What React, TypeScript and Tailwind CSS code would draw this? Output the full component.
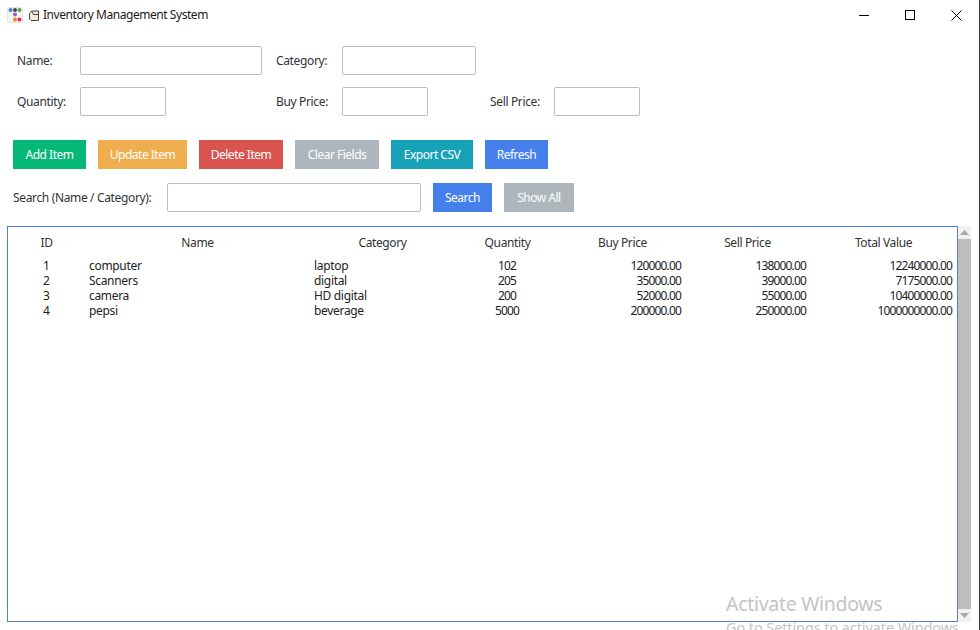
const FONT = "font-['Noto_Sans','Open_Sans',sans-serif]";

function Field({ w }: { w: string }) {
  return <input className={`${w} h-[29px] border border-[#bdbdbd] rounded-[2px] bg-white outline-none`} />;
}

function Label({ w, children }: { w: string; children: string }) {
  return <span className={`${w} shrink-0 text-[12px] tracking-[-0.35px] text-[#333333]`}>{children}</span>;
}

function Btn({ w, bg, children }: { w: string; bg: string; children: string }) {
  return (
    <button className={`${w} ${bg} h-[29px] shrink-0 text-white text-[12px] tracking-[-0.5px] flex items-center justify-center`}>
      {children}
    </button>
  );
}

const rows = [
  ["1", "computer", "laptop", "102", "120000.00", "138000.00", "12240000.00"],
  ["2", "Scanners", "digital", "205", "35000.00", "39000.00", "7175000.00"],
  ["3", "camera", "HD digital", "200", "52000.00", "55000.00", "10400000.00"],
  ["4", "pepsi", "beverage", "5000", "200000.00", "250000.00", "1000000000.00"],
];
const headers = ["ID", "Name", "Category", "Quantity", "Buy Price", "Sell Price", "Total Value"];
const cellClass = [
  "text-center",
  "text-left pl-1 tracking-[-0.32px]",
  "text-left pl-1 tracking-[-0.32px]",
  "text-center tracking-[-0.9px] pr-[1px]",
  "text-right pr-1 tracking-[-0.85px]",
  "text-right pr-1 tracking-[-0.85px]",
  "text-right pr-[5px] tracking-[-0.85px]",
];

export default function App() {
  return (
    <div className={`${FONT} relative w-[980px] h-[630px] overflow-hidden bg-white flex flex-col border-r border-[#3a3a3a]`}>
      {/* Title bar */}
      <div className="h-[30px] shrink-0 flex items-center">
        <svg width="16" height="16" viewBox="0 0 16 16" className="ml-[7px] mb-[1px]">
          <rect x="0.5" y="0.5" width="15" height="15" rx="1" fill="#f6f6f6" stroke="#e4e4e4" />
          <circle cx="3.5" cy="3" r="2" fill="#3f83e8" />
          <circle cx="8" cy="3" r="2" fill="#444444" />
          <circle cx="12.5" cy="3" r="2" fill="#3fae3a" />
          <circle cx="8" cy="7.5" r="2" fill="#9a5cc6" />
          <circle cx="8" cy="12.5" r="2" fill="#f08030" />
          <circle cx="12.5" cy="12.5" r="2" fill="#e8264f" />
        </svg>
        <svg width="12" height="12" viewBox="0 0 12 12" className="ml-[5px] mt-[1px]" fill="none" stroke="#444444" strokeWidth="1">
          <path d="M1.5 3.5 L3.5 1 H10.5 V10.5 H3 L1.5 9 Z" fill="#f3ead8" />
          <path d="M3.5 1 L5.5 4.5 H10.5" />
        </svg>
        <span className="ml-[3px] text-[12px] tracking-[-0.45px] text-[#1a1a1a]">Inventory Management System</span>
        <div className="ml-auto flex items-center">
          <div className="w-[46px] flex justify-center">
            <div className="w-[10px] h-px bg-black" />
          </div>
          <div className="w-[46px] flex justify-center">
            <div className="w-[10px] h-[10px] border border-black" />
          </div>
          <div className="w-[46px] flex justify-center">
            <svg width="11" height="11" viewBox="0 0 11 11" stroke="#000" strokeWidth="1">
              <path d="M0.5 0.5 L10.5 10.5 M10.5 0.5 L0.5 10.5" />
            </svg>
          </div>
        </div>
      </div>

      {/* Form */}
      <div className="mt-[16px] pl-[17px] flex items-center">
        <Label w="w-[63px]">Name:</Label>
        <Field w="w-[182px]" />
        <Label w="w-[66px] ml-[14px]">Category:</Label>
        <Field w="w-[134px]" />
      </div>
      <div className="mt-[12px] pl-[17px] flex items-center">
        <Label w="w-[63px]">Quantity:</Label>
        <Field w="w-[86px]" />
        <Label w="w-[66px] ml-[110px]">Buy Price:</Label>
        <Field w="w-[86px]" />
        <Label w="w-[64px] ml-[62px]">Sell Price:</Label>
        <Field w="w-[86px]" />
      </div>

      {/* Buttons */}
      <div className="mt-[24px] pl-[13px] flex gap-3">
        <Btn w="w-[73px]" bg="bg-[#06b877]">Add Item</Btn>
        <Btn w="w-[89px]" bg="bg-[#f0ad4e]">Update Item</Btn>
        <Btn w="w-[84px]" bg="bg-[#d9534f]">Delete Item</Btn>
        <Btn w="w-[84px]" bg="bg-[#adb5bd]">Clear Fields</Btn>
        <Btn w="w-[82px]" bg="bg-[#17a2b8]">Export CSV</Btn>
        <Btn w="w-[63px]" bg="bg-[#4680ec]">Refresh</Btn>
      </div>

      {/* Search */}
      <div className="mt-[14px] pl-[13px] flex items-center">
        <Label w="w-[154px]">Search (Name / Category):</Label>
        <Field w="w-[254px]" />
        <Btn w="w-[59px] ml-3" bg="bg-[#4680ec]">Search</Btn>
        <Btn w="w-[70px] ml-3" bg="bg-[#adb5bd]">Show All</Btn>
      </div>

      {/* Table + scrollbar */}
      <div className="mt-[14px] ml-[7px] flex">
        <div className="w-[951px] h-[396px] border border-[#4680ec] border-r-[#5a7fc8] border-b-[#5a7fc8] text-[12px] text-[#222222]">
          <div className="grid grid-cols-[77px_225px_145px_105px_125px_125px_147px] h-[31px] items-center pt-[1px] tracking-[-0.38px]">
            {headers.map((h) => (
              <div key={h} className="text-center text-[#333333]">{h}</div>
            ))}
          </div>
          {rows.map((r) => (
            <div key={r[0]} className="grid grid-cols-[77px_225px_145px_105px_125px_125px_147px] h-[15px] items-center leading-[15px]">
              {r.map((c, i) => (
                <div key={i} className={cellClass[i]}>{c}</div>
              ))}
            </div>
          ))}
        </div>
        <div className="w-[13px] h-[396px] bg-[#f0f0f0] flex flex-col">
          <div className="h-[13px] shrink-0 flex items-center justify-center">
            <svg width="9" height="5" viewBox="0 0 9 5"><path d="M4.5 0 L9 5 H0 Z" fill="#a8a8a8" /></svg>
          </div>
          <div className="flex-1 bg-[#bdbdbd]" />
          <div className="h-[13px] shrink-0 flex items-center justify-center">
            <svg width="9" height="5" viewBox="0 0 9 5"><path d="M0 0 H9 L4.5 5 Z" fill="#a8a8a8" /></svg>
          </div>
        </div>
      </div>

      {/* Activate Windows watermark */}
      <div className="absolute left-[726px] top-[591px] text-[#c4c4c4] whitespace-nowrap">
        <div className="text-[19.5px] leading-[26px] tracking-[-0.3px]">Activate Windows</div>
        <div className="text-[14.5px] leading-[18px] mt-[1px] tracking-[-0.1px]">Go to Settings to activate Windows.</div>
      </div>
    </div>
  );
}
